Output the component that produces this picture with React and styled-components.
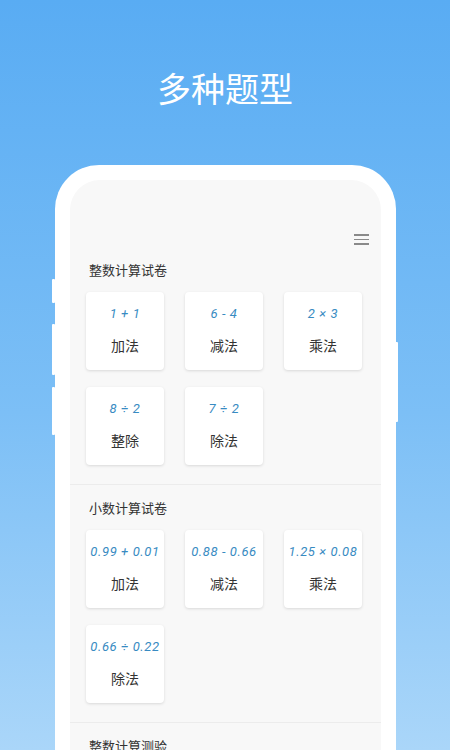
import { createGlobalStyle, styled } from 'styled-components';

const GlobalStyle = createGlobalStyle`
  html, body {
    margin: 0;
    padding: 0;
  }
  body {
    font-family: "Noto Sans CJK SC", "Noto Sans", sans-serif;
  }
`;

const Page = styled.div`
  width: 450px;
  height: 750px;
  overflow: hidden;
  background: linear-gradient(180deg, #59acf3 0%, #7cbff6 55%, #aad6f9 100%);
  display: flex;
  flex-direction: column;
  align-items: center;
`;

const Headline = styled.h1`
  margin: 67px 0 0;
  font-size: 34px;
  line-height: 42px;
  font-weight: 400;
  color: #ffffff;
`;

const Phone = styled.div`
  position: relative;
  margin-top: 56px;
  margin-left: 1px;
  width: 311px;
  flex: 1;
  border: 15px solid #ffffff;
  border-bottom: none;
  border-radius: 44px 44px 0 0;
  background: #ffffff;
`;

const SideKey = styled.span`
  position: absolute;
  top: ${({ $top }) => $top}px;
  height: ${({ $h }) => $h}px;
  ${({ $side }) => ($side === 'left' ? 'left: -18px;' : 'right: -17px;')}
  width: 3px;
  background: #ffffff;
  border-radius: 1px;
`;

const Screen = styled.div`
  height: 100%;
  background: #f8f8f8;
  border-radius: 30px 30px 0 0;
  overflow: hidden;
`;

const TopBar = styled.div`
  height: 80px;
  display: flex;
  justify-content: flex-end;
  align-items: flex-start;
  padding-right: 12px;
  box-sizing: border-box;
`;

const MenuButton = styled.div`
  margin-top: 54px;
  width: 15px;
  display: flex;
  flex-direction: column;
  gap: 3px;

  span {
    height: 1.5px;
    background: #8a8a8a;
  }
`;

const Section = styled.section`
  padding: ${({ $first }) => ($first ? '0' : '13px')} 16px 19px;
  border-bottom: 1px solid #ececec;
`;

const SectionTitle = styled.div`
  padding-left: 3px;
  font-size: 13px;
  line-height: 20px;
  color: #333333;
  margin-bottom: 12px;
`;

const Grid = styled.div`
  display: grid;
  grid-template-columns: repeat(3, 78px);
  column-gap: 21px;
  row-gap: 17px;
`;

const Card = styled.div`
  height: 78px;
  background: #ffffff;
  border-radius: 4px;
  box-shadow: 0 1px 3px rgba(0, 0, 0, 0.13);
  display: flex;
  flex-direction: column;
  align-items: center;
  padding-top: 13px;
  box-sizing: border-box;
`;

const Formula = styled.div`
  font-family: Roboto, "Liberation Sans", sans-serif;
  font-style: italic;
  font-weight: 400;
  font-size: 13px;
  line-height: 18px;
  color: #388bc2;
  white-space: nowrap;
  letter-spacing: 0.6px;
`;

const Label = styled.div`
  margin-top: 12px;
  font-size: 14px;
  line-height: 20px;
  color: #333333;
`;

const sections = [
  {
    title: '整数计算试卷',
    items: [
      ['1 + 1', '加法'],
      ['6 - 4', '减法'],
      ['2 × 3', '乘法'],
      ['8 ÷ 2', '整除'],
      ['7 ÷ 2', '除法'],
    ],
  },
  {
    title: '小数计算试卷',
    items: [
      ['0.99 + 0.01', '加法'],
      ['0.88 - 0.66', '减法'],
      ['1.25 × 0.08', '乘法'],
      ['0.66 ÷ 0.22', '除法'],
    ],
  },
  {
    title: '整数计算测验',
    items: [
      ['1 + 1', '加法'],
      ['6 - 4', '减法'],
      ['2 × 3', '乘法'],
    ],
  },
];

const App = () => {
  return (
    <Page>
      <GlobalStyle />
      <Headline>多种题型</Headline>
      <Phone>
        <SideKey $side="left" $top={99} $h={24} />
        <SideKey $side="left" $top={144} $h={51} />
        <SideKey $side="left" $top={207} $h={48} />
        <SideKey $side="right" $top={162} $h={80} />
        <Screen>
          <TopBar>
            <MenuButton>
              <span />
              <span />
              <span />
            </MenuButton>
          </TopBar>
          {sections.map((s, i) => (
            <Section key={s.title} $first={i === 0}>
              <SectionTitle>{s.title}</SectionTitle>
              <Grid>
                {s.items.map(([f, l]) => (
                  <Card key={f}>
                    <Formula>{f}</Formula>
                    <Label>{l}</Label>
                  </Card>
                ))}
              </Grid>
            </Section>
          ))}
        </Screen>
      </Phone>
    </Page>
  );
};

export default App;
